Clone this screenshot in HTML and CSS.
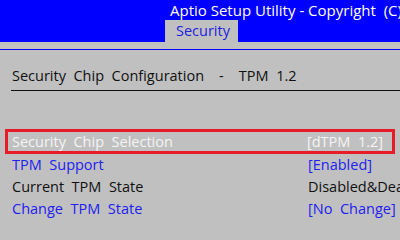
FILE: index.html
```html
<!DOCTYPE html>
<html>
<head>
<meta charset="utf-8">
<link rel="stylesheet" href="styles.css">
</head>
<body>
<header class="topbar">
  <div class="title">Aptio Setup Utility - Copyright&nbsp; (C) 2017 American Megatrends, Inc.</div>
  <div class="tabs"><span class="tab">Security</span></div>
</header>
<div class="rule-blue"></div>
<main class="content">
  <div class="section-title">Security&nbsp; Chip&nbsp; Configuration&nbsp;&nbsp;&nbsp; -&nbsp;&nbsp;&nbsp; TPM&nbsp; 1.2</div>
  <div class="gap"></div>
  <div class="row selected"><span class="label">Security&nbsp; Chip&nbsp; Selection</span><span class="value">[dTPM&nbsp; 1.2]</span></div>
  <div class="row link"><span class="label">TPM&nbsp; Support</span><span class="value">[Enabled]</span></div>
  <div class="row plain"><span class="label">Current&nbsp; TPM&nbsp; State</span><span class="value">Disabled&amp;Deactivated</span></div>
  <div class="row link"><span class="label">Change&nbsp; TPM&nbsp; State</span><span class="value">[No&nbsp; Change]</span></div>
</main>
</body>
</html>
```
FILE: styles.css
```css
html, body {
  margin: 0;
  padding: 0;
}
body {
  width: 400px;
  height: 240px;
  overflow: hidden;
  background: #c0c0c0;
  font-family: "Open Sans", "Noto Sans", sans-serif;
  font-size: 14.5px;
  color: #101010;
}
.topbar {
  background: #0000ff;
  height: 42px;
  display: flex;
  flex-direction: column;
  overflow: hidden;
}
.title {
  color: #ffffff;
  white-space: nowrap;
  padding-left: 170px;
  height: 20px;
  line-height: 20px;
  font-size: 15px;
  overflow: hidden;
}
.tabs {
  display: flex;
  padding-left: 165px;
}
.tab {
  background: #c0c0c0;
  color: #2020e0;
  width: 73px;
  height: 22px;
  line-height: 22px;
  padding-left: 11px;
  box-sizing: border-box;
}
.rule-blue {
  margin-top: 7px;
  height: 1px;
  background: #0000ff;
}
.content {
  display: flex;
  flex-direction: column;
  overflow: hidden;
}
.section-title {
  margin-top: 15px;
  margin-left: 11px;
  padding-left: 1px;
  height: 25px;
  line-height: 22px;
  white-space: nowrap;
  border-bottom: 1px solid #101010;
}
.gap {
  height: 38px;
}
.row {
  display: flex;
  height: 22px;
  line-height: 22px;
  white-space: nowrap;
  padding-left: 12px;
  overflow: hidden;
}
.row .label {
  width: 296px;
  flex: none;
}
.row.selected {
  margin-left: 5px;
  width: 390px;
  height: 25px;
  box-sizing: border-box;
  border: 3px solid #e81c28;
  padding-left: 4px;
  line-height: 19px;
  color: #f4f4f4;
}
.row.selected .label {
  width: 295px;
}
.row.link {
  color: #2020f0;
}
.row.plain {
  color: #101010;
}
```
